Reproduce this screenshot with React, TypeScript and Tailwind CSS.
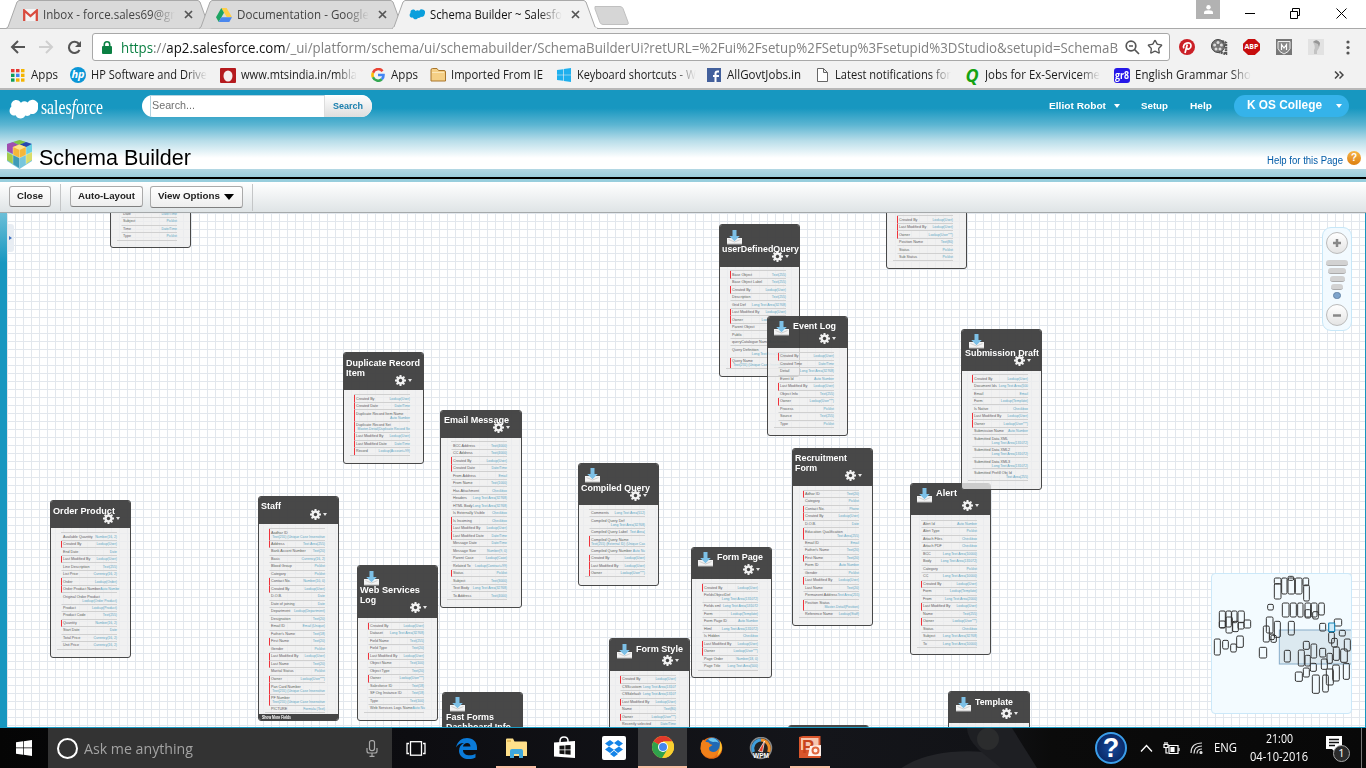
import { useLayoutEffect, useRef, type ReactNode } from "react";
import { Star } from "lucide-react";

/** Single line of text squeezed or stretched to a given width. */
function Fit({ w, className = "", children }: { w: number; className?: string; children: ReactNode }) {
  const ref = useRef<HTMLSpanElement>(null);
  useLayoutEffect(() => {
    const el = ref.current;
    if (el && el.offsetWidth) {
      el.style.transform = "none";
      el.style.transform = `scaleX(${w / el.getBoundingClientRect().width})`;
    }
  }, [w]);
  return (
    <span className={`block shrink-0 whitespace-nowrap ${className}`} style={{ width: w }}>
      <span ref={ref} className="inline-block origin-left">{children}</span>
    </span>
  );
}

/* ---------------------------------------------------------------- browser */

const fade = "[mask-image:linear-gradient(to_right,black_82%,transparent)]";

function Tab({ title, icon, active, className }: { title: string; icon: ReactNode; active?: boolean; className: string }) {
  return (
    <div className={`relative h-[29px] w-[206px] shrink-0 ${className}`}>
      <svg className="absolute inset-0" width="206" height="29" viewBox="0 0 206 29">
        <path d="M0 28.5 L2 27 L11 2 L13 .5 H192 L194 2 L203 27 L206 28.5" fill={active ? "#f2f2f2" : "#dadada"} stroke="#a9a9a9" />
        {active && <path d="M1 28.5H205" stroke="#f2f2f2" strokeWidth="2" />}
      </svg>
      <div className="relative flex h-[29px] items-center pl-[17px]">
        {icon}
        <Fit w={132} className={`ml-[5px] text-[12px] ${fade} ${active ? "text-[#111]" : "text-[#444]"}`}>{title}</Fit>
        <svg className="ml-[9px]" width="9" height="9" viewBox="0 0 9 9"><path d="M1 1l7 7M8 1l-7 7" stroke="#555" strokeWidth="1.7" /></svg>
      </div>
    </div>
  );
}

const Gmail = () => (
  <svg width="15" height="12" viewBox="0 0 15 12"><rect width="15" height="12" rx="1" fill="#f3f3f3" /><path d="M1.2 12V1.5L7.5 7l6.300-5.500V12" fill="none" stroke="#d94b3e" strokeWidth="2.300" /></svg>
);
const Drive = () => (
  <svg width="16" height="14" viewBox="0 0 16 14"><path d="M5.300 0h5.300L16 9h-5.300z" fill="#ffcf48" /><path d="M5.300 0L0 9.200 2.700 14 8 4.700z" fill="#1da462" /><path d="M5.300 9.300H16L13.300 14H2.700z" fill="#4a87ee" /></svg>
);
const Cloud = ({ w, h, fill }: { w: number; h: number; fill: string }) => (
  <svg width={w} height={h} viewBox="0 0 28 20" className="shrink-0"><path d="M11.500 3.500A5.500 5.500 0 0 1 18 3.200a5.800 5.800 0 0 1 10 5.800c-.3 4-4 6-7 5.200-1 2-3.500 2.600-5.300 1.700-1.500 3.800-7.700 4-9.200-.3C3 16.500.2 13.800.6 10.800c.1-2 .9-2.900 1.700-3.700C.9 2 7.500-1.800 11.500 3.500z" fill={fill} /></svg>
);

function WindowsLogo({ s, fill }: { s: number; fill: string }) {
  return <svg width={s} height={s} viewBox="0 0 16 16"><path d="M0 2.300L7 1.300V7.600H0zM7.700 1.200L16 0V7.600H7.700zM0 8.300H7V14.700L0 13.700zM7.700 8.300H16V16L7.700 14.800z" fill={fill} /></svg>;
}

function Bookmark({ icon, text, w, faded, className }: { icon: ReactNode; text: string; w: number; faded?: boolean; className: string }) {
  return (
    <div className={`flex shrink-0 items-center gap-[5px] ${className}`}>
      <span className="flex w-[16px] shrink-0 justify-center">{icon}</span>
      <Fit w={w} className={faded ? fade : ""}>{text}</Fit>
    </div>
  );
}

const appColors = ["#e53935", "#e53935", "#f4b400", "#0f9d58", "#4285f4", "#f4b400", "#0f9d58", "#f4b400", "#f4b400"];

function Browser() {
  return (
    <div className="shrink-0 font-['Open_Sans','Noto_Sans',sans-serif]">
      <div className="flex h-[29px] border-b border-[#a9a9a9] bg-white">
        <Tab className="ml-[6px]" title="Inbox - force.sales69@gr" icon={<Gmail />} />
        <Tab className="-ml-[13px]" title="Documentation - Google" icon={<Drive />} />
        <Tab className="-ml-[13px] z-10" active title="Schema Builder ~ Salesfo" icon={<Cloud w={16} h={11} fill="#0a9fdc" />} />
        <svg className="-ml-[4px] mt-[6px]" width="36" height="19" viewBox="0 0 36 19"><path d="M1 .5H26q2 0 3 2L34 16q1 2.500-1 2.500H9q-2 0-3-2L1 3z" fill="#d6d6d6" stroke="#c0c0c0" /></svg>
        <div className="ml-auto mr-[19px] flex">
          <div className="flex h-[19px] w-[24px] items-center justify-center bg-[#b2b2b2]">
            <svg width="9" height="9" viewBox="0 0 9 9" fill="#fff"><circle cx="4.500" cy="2.200" r="2.200" /><path d="M0 9V7.500Q0 5.200 4.500 5.200T9 7.500V9z" /></svg>
          </div>
          <svg className="ml-[25px] mt-[8px]" width="10" height="10"><path d="M0 5.500H10" stroke="#000" /></svg>
          <svg className="ml-[35px] mt-[8px]" width="11" height="11" fill="none" stroke="#000"><path d="M.5 3.500h7v7h-7zM2.500 3.500v-3h7v7h-2" /></svg>
          <svg className="ml-[35px] mt-[8px]" width="11" height="11" stroke="#000"><path d="M.5.500l10 10M10.500.500l-10 10" /></svg>
        </div>
      </div>
      <div className="flex h-[33px] items-center bg-[#f2f2f2] pt-[3px]">
        <svg className="ml-[10px]" width="15" height="14" viewBox="0 0 15 14" fill="none" stroke="#555" strokeWidth="2"><path d="M8 1L2 7l6 6M2 7h13" /></svg>
        <svg className="ml-[14px]" width="15" height="14" viewBox="0 0 15 14" fill="none" stroke="#cfcfcf" strokeWidth="2"><path d="M7 1l6 6-6 6M13 7H0" /></svg>
        <svg className="ml-[13px]" width="15" height="15" viewBox="0 0 15 15" fill="none" stroke="#555" strokeWidth="2.100"><path d="M12.500 10A5.600 5.600 0 1 1 12 4" /><path d="M14 1v6H8z" fill="#555" stroke="none" /></svg>
        <div className="ml-[10px] flex h-[28px] w-[1078px] shrink-0 items-center rounded-[3px] border border-[#a8a8a8] bg-white text-[14px] text-[#808080]">
          <svg className="ml-[9px] mr-[9px] shrink-0" width="10" height="13" viewBox="0 0 10 13"><rect y="5" width="10" height="8" rx="1" fill="#0b8043" /><path d="M2.300 6V3.500a2.700 2.700 0 0 1 5.400 0V6" fill="none" stroke="#0b8043" strokeWidth="1.600" /></svg>
          <Fit w={997}>
            <span className="text-[#0b8043]">https</span>://<span className="text-[#111]">ap2.salesforce.com</span>/_ui/platform/schema/ui/schemabuilder/SchemaBuilderUi?retURL=%2Fui%2Fsetup%2FSetup%3Fsetupid%3DStudio&amp;setupid=SchemaB
          </Fit>
          <svg className="ml-[7px] shrink-0" width="15" height="15" viewBox="0 0 15 15" fill="none" stroke="#555" strokeWidth="1.700"><circle cx="6" cy="6" r="4.800" /><path d="M9.500 9.500L14 14M4 6h4" /></svg>
          <Star className="ml-[7px] shrink-0" size={16} color="#555" />
        </div>
        <svg className="ml-[9px]" width="16" height="16" viewBox="0 0 16 16"><circle cx="8" cy="8" r="8" fill="#cb2027" /><path d="M4.800 9.300C2.500 4 12.500 1.500 12 7c-.3 3.500-3.800 4-4.300 2M8.300 5.500L6 14" fill="none" stroke="#fff" strokeWidth="1.700" /></svg>
        <svg className="ml-[16px]" width="17" height="16" viewBox="0 0 17 16"><circle cx="7" cy="7" r="6.500" fill="#777" stroke="#444" /><g fill="#ddd"><circle cx="7" cy="3.500" r="1.500" /><circle cx="3.600" cy="6" r="1.500" /><circle cx="10.400" cy="6" r="1.500" /><circle cx="5" cy="10" r="1.500" /><circle cx="9" cy="10" r="1.500" /></g><path d="M11 2l4 2v11l-7-2" fill="none" stroke="#555" strokeWidth="2.500" strokeDasharray="2 .7" /></svg>
        <div className="ml-[15px] flex h-[16px] w-[17px] items-center justify-center bg-[#c70d0d] text-[7px] font-bold text-white [clip-path:polygon(30%_0,70%_0,100%_30%,100%_70%,70%_100%,30%_100%,0_70%,0_30%)]">ABP</div>
        <svg className="ml-[16px]" width="16" height="16" viewBox="0 0 16 16"><rect width="16" height="16" fill="#777" /><path d="M2 2.500h12v7Q13 13 8 15 3 13 2 9.500z" fill="#8a8a8a" stroke="#eee" /><path d="M5.500 11V5.500L8 9l2.500-3.500V11" fill="none" stroke="#fff" strokeWidth="1.200" /></svg>
        <svg className="ml-[16px]" width="16" height="16" viewBox="0 0 16 16"><rect width="16" height="16" fill="#e2e2e2" /><path d="M5 3q4-4 7 1l-1 5-2 3v3H6v-4q2-3-1-8z" fill="#c3c3c3" /><path d="M5 3q4-4 7 1l-1 4-1-3z" fill="#969696" /></svg>
        <svg className="ml-[22px]" width="4" height="15" viewBox="0 0 4 15" fill="#555"><circle cx="2" cy="2" r="1.600" /><circle cx="2" cy="7.500" r="1.600" /><circle cx="2" cy="13" r="1.600" /></svg>
      </div>
      <div className="flex h-[28px] items-center border-b-2 border-[#b8b8b8] bg-[#f2f2f2] text-[12px] text-[#1b1b1b]">
        <Bookmark className="ml-[10px]" text="Apps" w={27} icon={<svg width="14" height="13" viewBox="0 0 14 13">{appColors.map((c, i) => <rect key={i} x={(i % 3) * 5} y={Math.floor(i / 3) * 4.700} width="3.500" height="3.300" fill={c} />)}</svg>} />
        <Bookmark className="ml-[12px]" text="HP Software and Drive" w={116} faded icon={<span className="flex size-[16px] items-center justify-center rounded-full bg-[#0b96d6] pb-[2px] text-[11px] font-bold italic text-white">hp</span>} />
        <Bookmark className="ml-[13px]" text="www.mtsindia.in/mbla" w={116} faded icon={<svg width="16" height="15"><rect width="16" height="15" rx="1" fill="#b51a1e" /><ellipse cx="8" cy="8" rx="4.500" ry="5.500" fill="#f6eeee" /></svg>} />
        <Bookmark className="ml-[13px]" text="Apps" w={27} icon={<svg width="14" height="14" viewBox="0 0 14 14" fill="none" strokeWidth="2.600"><path d="M11.500 3.200A5.500 5.500 0 0 0 2 4.700" stroke="#ea4335" /><path d="M2 4.700a5.500 5.500 0 0 0 0 4.600" stroke="#fbbc05" /><path d="M2 9.300a5.500 5.500 0 0 0 8.800 2" stroke="#34a853" /><path d="M10.800 11.300Q12.600 9.600 12.500 7H7" stroke="#4285f4" /></svg>} />
        <Bookmark className="ml-[12px]" text="Imported From IE" w={92} icon={<svg width="16" height="14" viewBox="0 0 16 14"><path d="M1 13V2q0-1.500 1.500-1.500H7L8.500 2.500H14q1.500 0 1.500 1.500v9z" fill="#f5cf85" stroke="#a9762c" /><path d="M2 4.500h12" stroke="#fbe6b8" /></svg>} />
        <Bookmark className="ml-[13px]" text="Keyboard shortcuts - W" w={119} faded icon={<WindowsLogo s={14} fill="#1fb0ee" />} />
        <Bookmark className="ml-[10px]" text="AllGovtJobs.in" w={74} icon={<svg width="14" height="14"><rect width="14" height="14" fill="#43609c" /><path d="M8.500 14V5.500q0-2 2-2H12M6 8h6" fill="none" stroke="#fff" strokeWidth="2" /></svg>} />
        <Bookmark className="ml-[13px]" text="Latest notifications for" w={116} faded icon={<svg width="11" height="14" fill="none" stroke="#666"><path d="M.5.500h6l4 4v9H.5zM6.500.500v4h4" fill="#fff" /></svg>} />
        <Bookmark className="ml-[13px]" text="Jobs for Ex-Serviceme" w={115} faded icon={<span className="text-[18px] font-bold italic leading-none text-[#14a214]">Q</span>} />
        <Bookmark className="ml-[14px]" text="English Grammar Sho" w={116} faded icon={<span className="flex h-[15px] w-[16px] items-center justify-center rounded-[3px] bg-[#2618e8] text-[10px] font-bold leading-none text-white"><Fit w={14}>gr8</Fit></span>} />
        <svg className="ml-auto mr-[22px]" width="10" height="8" fill="none" stroke="#444" strokeWidth="1.500"><path d="M1 0.500l3.500 3.500L1 7.500M5.500 .5L9 4 5.500 7.500" /></svg>
      </div>
    </div>
  );
}

/* ------------------------------------------------------------ page header */

function PageHeader() {
  return (
    <div className="shrink-0 font-['Liberation_Sans',Arial,sans-serif]">
      <div className="h-[79px] bg-[linear-gradient(to_bottom,#1797c0_0%,#1797c0_23%,#5cb5d2_44%,#b7dde9_64%,#fff_86%)]">
        <div className="flex h-[48px] items-start pt-[5px]">
          <div className="ml-[9px] mt-[4px]"><Cloud w={29} h={21} fill="#fff" /></div>
          <Fit w={62} className="ml-[3px] font-['Liberation_Serif',serif] text-[21px] leading-[24px] text-white"><span>sales</span><span className="italic">f</span>orce</Fit>
          <div className="ml-[39px] flex h-[22px] w-[230px] overflow-hidden rounded-full bg-white">
            <div className="ml-[8px] flex w-[175px] items-start border-x border-t border-[#b5d3df] border-r-[#ddd]"><Fit w={43} className="pl-px text-[11px] leading-[18px] text-[#707070]">Search...</Fit></div>
            <div className="flex flex-1 items-center bg-linear-to-b from-white to-[#dedede] pl-[8px] text-[9.500px] font-bold text-[#1a7fae]"><Fit w={30}>Search</Fit></div>
          </div>
          <div className="ml-auto mr-[17px] flex h-[22px] items-center text-[9.500px] font-bold text-white">
            <Fit w={57}>Elliot Robot</Fit>
            <span className="ml-[8px] border-x-[3.500px] border-t-4 border-x-transparent border-t-white" />
            <Fit w={27} className="ml-[21px]">Setup</Fit>
            <Fit w={22} className="ml-[22px]">Help</Fit>
            <div className="ml-[22px] flex h-[22px] w-[115px] items-center rounded-full bg-[#35b3ea] pl-[13px] text-[12px]">
              <Fit w={75} className="pb-[2px]">K OS College</Fit>
              <span className="ml-[14px] border-x-[3.500px] border-t-4 border-x-transparent border-t-white" />
            </div>
          </div>
        </div>
        <div className="flex h-[31px] items-center pt-[7px]">
          <svg className="ml-[7px] -mt-[6px]" width="25" height="29" viewBox="0 0 25 29">
            <path d="M12.500 0L25 4v17l-12.500 8L0 21V4z" fill="#78c6dc" />
            <path d="M0 4l6-2 6 3v9l-6 0-6-3z" fill="#a04fb0" /><path d="M6 2l6.500-2L19 2l-6.500 3z" fill="#82c341" /><path d="M19 2l6 2-5 4-8-3z" fill="#2747ae" />
            <path d="M6 7l6.500-2.500L19 7v8l-6.500 3L6 15z" fill="#f5b73a" /><path d="M6 7l6.500-2.500L19 7l-6.500 3z" fill="#ffe28a" />
            <path d="M0 12l6 3v9l-6-4z" fill="#a4cc4c" /><path d="M6 15l6.500 3v10L6 24z" fill="#3e9bb6" /><path d="M19 7l6-3v8l-6 3z" fill="#6bd0e2" /><path d="M19 15l6-3v8l-6 4z" fill="#d9dd6a" />
            <path d="M12.500 10v18M6 7v17M19 7v17M0 12l12.500 6L25 12" fill="none" stroke="#fff" strokeOpacity=".4" strokeWidth=".8" />
          </svg>
          <Fit w={152} className="ml-[7px] pt-[2px] text-[22px] leading-[26px] text-black">Schema Builder</Fit>
          <Fit w={76} className="ml-auto pt-[7px] text-[10px] text-[#015ba7]">Help for this Page</Fit>
          <span className="ml-[4px] mr-[5px] mt-[1px] flex size-[14px] items-center justify-center rounded-full bg-linear-to-b from-[#f6b545] to-[#dd7f0a] text-[10px] font-bold text-white">?</span>
        </div>
      </div>
      <div className="h-[8px] bg-linear-to-b from-[#b4d8e4] to-[#9bcddc]" />
      <div className="h-[2px] bg-black" />
      <div className="h-[3px] bg-[#98cedd]" />
      <div className="flex h-[31px] items-center border-b border-[#a5a9aa] bg-linear-to-b from-white to-[#dfe4e6] text-[9.500px] font-bold text-[#222]">
        <div className="-mt-px ml-[9px] flex h-[21px] w-[42px] items-center justify-center rounded-[3px] border border-[#aaa] border-b-[#7f7f7f] bg-linear-to-b from-white to-[#eee]"><Fit w={26}>Close</Fit></div>
        <div className="ml-[9px] h-[27px] w-px bg-[#c4c6c7]" />
        <div className="-mt-px ml-[9px] flex h-[21px] w-[73px] items-center justify-center rounded-[3px] border border-[#aaa] border-b-[#7f7f7f] bg-linear-to-b from-white to-[#eee]"><Fit w={57}>Auto-Layout</Fit></div>
        <div className="ml-[7px] flex h-[22px] w-[93px] items-center justify-center gap-[4px] rounded-[3px] border border-[#aaa] border-b-[#7f7f7f] bg-linear-to-b from-white to-[#eee] pb-px pr-[2px]">
          <Fit w={62}>View Options</Fit>
          <span className="border-x-[5px] border-t-[6px] border-x-transparent border-t-black" />
        </div>
        <div className="ml-[9px] h-[27px] w-px bg-[#c4c6c7]" />
      </div>
    </div>
  );
}

/* ----------------------------------------------------------------- canvas */

const L = "Lookup(User)", O = "Lookup(User***)", T = "Text(255)", P = "Picklist", C = "Checkbox", A = "Auto Number", D = "Date/Time", LT = "Long Text Area(32768)", U = "Text(255) (Unique Case Insensitive";

/** Field rows: "!" marks a required field, "/" puts the type on its own line. */
type Card = { x: number; y: number; h: number; w?: number; hdr: number; list: number; title: string[]; tx?: number; ty: number; icon?: [number, number]; gear?: [number, number]; more?: boolean; f: [string, string, string?][] };

const cards: Card[] = [
  { x: 110, y: 180, h: 68, hdr: 10, list: 29.700, title: [], ty: 0, f: [["Date", D], ["Subject", P], ["Time", D], ["Type", P]] },
  { x: 886, y: 170, h: 99, hdr: 10, list: 45.300, title: [], ty: 0, f: [["Created By", L, "!"], ["Last Modified By", L, "!"], ["Owner", O, "!"], ["Position Name", "Text(80)"], ["Status", P], ["Sub Status", P]] },
  { x: 719, y: 224, h: 153, hdr: 43, list: 46.300, title: ["userDefinedQuery"], ty: 25, icon: [8, 6], gear: [57.500, 32], f: [["Base Object", T, "!"], ["Base Object Label", T], ["Created By", L, "!"], ["Description", T], ["Grid Def", LT], ["Last Modified By", L, "!"], ["Owner", O, "!"], ["Parent Object", T], ["Public", C], ["queryCatalogue Name", "Auto Numbe"], ["Query Definition", LT, "/"], ["Query Name", U, "!/"]] },
  { x: 767, y: 316, h: 120, hdr: 32, list: 36, title: ["Event Log"], tx: 26, ty: 10, icon: [7, 5], gear: [56.500, 22], f: [["Created By", L, "!"], ["Created Time", D], ["Detail", LT], ["Event Id", A], ["Last Modified By", L, "!"], ["Object Info", T], ["Owner", O, "!"], ["Process", P], ["Source", T], ["Type", P]] },
  { x: 343, y: 352, h: 112, hdr: 38, list: 42.300, title: ["Duplicate Record", "Item"], ty: 11, gear: [56.500, 28], f: [["Created By", L, "!"], ["Created Date", D, "!"], ["Duplicate Record Item Name", A, "!/"], ["Duplicate Record Set", "Master-Detail(Duplicate Record Se", "!/"], ["Last Modified By", L, "!"], ["Last Modified Date", D, "!"], ["Record", "Lookup(Account+99)", "!"]] },
  { x: 50, y: 500, h: 158, hdr: 28, list: 32.300, title: ["Order Product"], ty: 11, gear: [57.500, 18], f: [["Available Quantity", "Number(16, 2)"], ["Created By", L, "!"], ["End Date", "Date"], ["Last Modified By", L, "!"], ["Line Description", T], ["List Price", "Currency(16, 2)"], ["Order", "Lookup(Order)", "!"], ["Order Product Number", "Auto Numbe", "!"], ["Original Order Product", "Lookup(Order Product)", "/"], ["Product", "Lookup(Product)"], ["Product Code", T], ["Quantity", "Number(16, 2)", "!"], ["Start Date", "Date"], ["Total Price", "Currency(16, 2)"], ["Unit Price", "Currency(16, 2)"]] },
  { x: 258, y: 496, h: 225, hdr: 28, list: 32.300, title: ["Staff"], ty: 10, gear: [56.500, 18], more: true, f: [["Aadhar ID", U, "!/"], ["Address", "Text Area(255)", "!"], ["Bank Accont Number", "Text(20)"], ["Basic", "Currency(16, 2)"], ["Blood Group", P], ["Category", P], ["Contact No.", "Number(10, 0)", "!"], ["Created By", L, "!"], ["D.O.B.", "Date"], ["Date of joining", "Date"], ["Department", "Lookup(Department)"], ["Designation", "Text(20)"], ["Email ID", "Email (Unique)"], ["Father's Name", "Text(18)"], ["First Name", "Text(20)", "!"], ["Gender", P], ["Last Modified By", L, "!"], ["Last Name", "Text(20)", "!"], ["Marital Status", P], ["Owner", O, "!"], ["Pan Card Number", U, "!/"], ["PF Number", U, "!/"], ["PICTURE", "Formula (Text)"]] },
  { x: 357, y: 565, h: 156, hdr: 53, list: 56.500, title: ["Web Services", "Log"], ty: 25, icon: [7, 6], gear: [57.500, 42.500], f: [["Created By", L, "!"], ["Dataset", LT], ["Field Name", T], ["Field Type", "Text(20)"], ["Last Modified By", L, "!"], ["Object Name", "Text(100)"], ["Object Type", "Text(20)"], ["Owner", O, "!"], ["Salesforce ID", "Text(18)"], ["SF Org Instance ID", "Text(18)"], ["Type", "Text(100)"], ["Web Services Logs Name", "Auto Nu"]] },
  { x: 440, y: 410, w: 82, h: 198, hdr: 28, list: 31.300, title: ["Email Message"], tx: 4, ty: 10, gear: [57.500, 17.500], f: [["BCC Address", "Text(4000)"], ["CC Address", "Text(4000)"], ["Created By", L, "!"], ["Created Date", D, "!"], ["From Address", "Email"], ["From Name", "Text(1000)"], ["Has Attachment", C], ["Headers", LT], ["HTML Body", LT], ["Is Externally Visible", C], ["Is Incoming", C, "!"], ["Last Modified By", L, "!"], ["Last Modified Date", D, "!"], ["Message Date", D], ["Message Size", "Number(9, 0)"], ["Parent Case", "Lookup(Case)"], ["Related To", "Lookup(Contract+99)"], ["Status", P, "!"], ["Subject", "Text(3000)"], ["Text Body", LT], ["To Address", "Text(4000)"]] },
  { x: 442, y: 692, h: 120, hdr: 60, list: 70, title: ["Fast Forms", "Dashboard Info"], tx: 4, ty: 25, icon: [8, 5], f: [] },
  { x: 578, y: 463, h: 123, hdr: 42, list: 45.700, title: ["Compiled Query"], ty: 25, icon: [7, 5], gear: [56.500, 32], f: [["Comments", "Long Text Area(512)"], ["Compiled Query Def", LT, "/"], ["Compiled Query Label", "Text Area("], ["Compiled Query Name", "Text(255) (External ID) (Unique Cas", "!/"], ["Compiled Query Number", "Auto Nu"], ["Created By", L, "!"], ["Last Modified By", L, "!"], ["Owner", O, "!"]] },
  { x: 609, y: 638, h: 130, hdr: 33, list: 37, title: ["Form Style"], tx: 27, ty: 11, icon: [8, 6], gear: [57.500, 22], f: [["Created By", L, "!"], ["CSScustom", "Long Text Area(13107"], ["CSSdefault", "Long Text Area(13107"], ["Last Modified By", L, "!"], ["Name", "Text(80)"], ["Owner", O, "!"], ["Recently selected", D]] },
  { x: 691, y: 547, h: 131, hdr: 32, list: 36.300, title: ["Form Page"], tx: 26, ty: 10, icon: [7, 5], gear: [57, 22], f: [["Created By", L, "!"], ["FieldsObjectDef", "Long Text Area(131072)", "/"], ["Fields xml", "Long Text Area(131072"], ["Form", "Lookup(Template)"], ["Form Page ID", A], ["Html", "Long Text Area(131072)"], ["Is Hidden", C], ["Last Modified By", L, "!"], ["Owner", O, "!"], ["Page Order", "Number(18, 0)"], ["Page Title", "Long Text Area(500)"]] },
  { x: 792, y: 448, h: 178, hdr: 38, list: 41.700, title: ["Recruitment", "Form"], ty: 10, gear: [57.500, 27.500], f: [["Adhar ID", "Text(20)", "!"], ["Category", P], ["Contact No.", "Phone", "!"], ["Created By", L, "!"], ["D.O.B.", "Date"], ["Education Qualification", "Text Area(255)", "!/"], ["Email ID", "Email"], ["Father's Name", "Text(20)"], ["First Name", "Text(20)", "!"], ["Form ID", A], ["Gender", P], ["Last Modified By", L, "!"], ["Last Name", "Text(20)"], ["Permanent Address", "Text Area(255)"], ["Position Status", "Master-Detail(Position)", "!/"], ["Reference Name", "Lookup(Staff)"]] },
  { x: 910, y: 483, h: 172, hdr: 32, list: 36.500, title: ["Alert"], tx: 26, ty: 10, icon: [7, 5], gear: [56.500, 22], f: [["Alert Id", A], ["Alert Type", P], ["Attach Files", C], ["Attach PDF", C], ["BCC", "Long Text Area(10000)"], ["Body", "Long Text Area(131072)"], ["Category", P], ["CC", "Long Text Area(10000)"], ["Created By", L, "!"], ["Form", "Lookup(Template)"], ["From", "Long Text Area(2000)"], ["Last Modified By", L, "!"], ["Name", T], ["Owner", O, "!"], ["Status", C], ["Subject", LT], ["To", "Long Text Area(10000)"]] },
  { x: 961, y: 329, h: 161, hdr: 42, list: 45.300, title: ["Submission Draft"], tx: 4, ty: 23.500, icon: [8, 5], gear: [57.500, 31.500], f: [["Created By", L, "!"], ["Document Ids", "Long Text Area(500"], ["Email", "Email"], ["Form", "Lookup(Template)"], ["Is Native", C], ["Last Modified By", L, "!"], ["Owner", O, "!"], ["Submission Name", A], ["Submitted Data XML", "Long Text Area(131072)", "/"], ["Submitted Data XML2", "Long Text Area(131072)", "/"], ["Submitted Data XML3", "Long Text Area(131072)", "/"], ["Submitted Prefill Obj Id", "Text Area(255)", "/"]] },
  { x: 948, y: 691, w: 82, h: 90, hdr: 32, list: 36, title: ["Template"], tx: 27, ty: 11, icon: [8, 6], gear: [58, 22], f: [] },
  { x: 788, y: 725, h: 60, hdr: 30, list: 36, title: [], ty: 0, f: [] },
];

const titleWidths: Record<string, number> = { userDefinedQuery: 77, "Event Log": 43, "Duplicate Record": 74, Item: 19, "Order Product": 62, Staff: 20, "Web Services": 60, Log: 16, "Email Message": 65, "Fast Forms": 48, "Dashboard Info": 65, "Compiled Query": 69, "Form Style": 47, "Form Page": 46, Recruitment: 52, Form: 22, Alert: 21, "Submission Draft": 74, Template: 38 };

function Tray() {
  return (
    <svg width="15" height="15" viewBox="0 0 15 15">
      <path d="M0 8h15v6H0z" fill="#f3f3f3" /><path d="M0 14h15" stroke="#bbb" /><path d="M1.500 9.500L7.500 12l6-2.500" fill="none" stroke="#d0d0d0" />
      <path d="M5.500 0h4v6h3.300L7.500 11.300 2.200 6h3.300z" fill="#7dc0e6" />
    </svg>
  );
}

function Gear() {
  return (
    <svg width="17" height="11" viewBox="0 0 17 11">
      <g stroke="#f1f1f1" strokeWidth="2"><path d="M5.500 0v11M0 5.500h11M1.600 1.600l7.800 7.800M9.400 1.600L1.600 9.400" /></g>
      <circle cx="5.500" cy="5.500" r="3" fill="none" stroke="#f1f1f1" strokeWidth="2.200" /><circle cx="5.500" cy="5.500" r="1.700" fill="#444" />
      <path d="M13 4h4l-2 3z" fill="#e6e6e6" />
    </svg>
  );
}

function EntityCard({ c }: { c: Card }) {
  return (
    <div className="absolute overflow-hidden rounded-[3px] border border-[#484848] bg-[#eeeeee]/80" style={{ left: c.x - 7, top: c.y - 213, width: c.w ?? 81, height: c.h }}>
      <div className="bg-[#1e1e1e]/80" style={{ height: c.hdr - 1 }} />
      <div className="pl-[10px]" style={{ paddingTop: c.list - c.hdr }}>
        <div className="w-[56px] border-t border-[#d0d0d0]">
          {c.f.map(([name, type, flag = ""], i) => {
            const two = flag.includes("/");
            return (
              <div key={i} className={`flex border-b border-[#d0d0d0] border-l pl-[1px] text-[3.700px] leading-[4px] ${two ? "h-[11.400px] flex-col pt-[1.500px]" : "h-[7.500px] items-center justify-between"} ${flag.includes("!") ? "border-l-[#f0323c]" : "border-l-transparent"}`}>
                <span className="whitespace-nowrap text-[#5c5c5c]">{name}</span>
                <span className={`whitespace-nowrap text-[3.400px] text-[#5ba6c4] ${two ? "self-end" : ""}`}>{type}</span>
              </div>
            );
          })}
        </div>
        {c.f.length > 0 && <div className="-mt-px ml-[-4px] h-px w-[60px] bg-[#d0d0d0]" />}
      </div>
      {c.more && <div className="absolute inset-x-0 bottom-0 flex h-[6px] items-center bg-[#444] pl-[3px] text-[4.500px] font-bold leading-[5px] text-white"><Fit w={29}>Show More Fields</Fit></div>}
      {c.icon && <div className="absolute" style={{ left: c.icon[0] - 1, top: c.icon[1] - 1 }}><Tray /></div>}
      {c.gear && <div className="absolute" style={{ left: c.gear[0] - 6, top: c.gear[1] - 6.500 }}><Gear /></div>}
      <div className="absolute text-[9.500px] font-bold leading-[10px] text-white" style={{ left: (c.tx ?? 3) - 1, top: c.ty - 6 }}>
        {c.title.map((t) => <Fit key={t} w={titleWidths[t]}>{t}</Fit>)}
      </div>
    </div>
  );
}

/** Overview boxes as x, y, width, height in thirds of a pixel. */
const mini: number[][] = [[223,40,20,18],[223,57,20,46],[245,40,16,48],[264,35,17,12],[264,40,20,48],[286,40,20,48],[309,40,17,23],[311,61,17,48],[203,119,17,17],[247,115,20,42],[271,115,18,42],[293,115,16,42],[315,115,17,42],[315,135,17,25],[334,115,17,42],[338,141,17,22],[356,115,17,36],[58,139,18,50],[58,169,18,21],[78,139,16,48],[78,157,19,48],[95,139,16,35],[98,170,17,31],[114,139,19,35],[114,173,18,20],[132,166,20,24],[190,184,18,48],[199,157,20,48],[223,170,18,48],[209,208,14,17],[213,212,16,21],[265,170,18,41],[359,176,18,23],[403,163,22,21],[418,197,18,17],[43,223,18,48],[68,227,17,26],[92,238,17,24],[110,214,20,34],[178,248,22,32],[253,257,18,35],[310,230,18,24],[333,238,17,42],[295,256,18,48],[315,272,16,32],[359,251,18,26],[386,203,17,32],[395,221,17,26],[400,247,18,40],[381,266,16,30],[433,223,18,36],[422,253,20,40],[331,296,18,24],[364,283,18,31],[310,310,18,27],[286,322,21,28],[337,331,21,55],[368,331,17,51],[379,313,21,48],[398,301,20,48],[430,296,18,48]];

function Minimap() {
  return (
    <div className="absolute left-[1204px] top-[360px] h-[141px] w-[141px] rounded-[4px] border border-[#cbe8f9] bg-[#f3fbff]">
      <svg width="139" height="139" viewBox="36 28 417 417">
        <rect x="238" y="196" width="220" height="102" fill="#dce9f0" stroke="#86acc8" strokeWidth="3" />
        {mini.map(([x, y, w, h], i) => <rect key={i} x={x} y={y} width={w} height={h} rx="4" fill="none" stroke="#333" strokeWidth="3" />)}
        <rect x="386" y="175" width="18" height="26" rx="2" fill="#cdeaf8" stroke="#1482b4" strokeWidth="3.500" />
      </svg>
    </div>
  );
}

function ZoomControl() {
  return (
    <div className="absolute left-[1315px] top-[14px] flex h-[104px] w-[30px] flex-col items-center rounded-[9px] border border-[#c7e7f8] bg-[#f2faff] pt-[4px]">
      <div className="flex size-[22px] shrink-0 items-center justify-center rounded-full border border-[#bbb] bg-linear-to-b from-white to-[#e4e4e4]"><svg width="8" height="8"><path d="M0 4h8M4 0v8" stroke="#888" strokeWidth="2.500" /></svg></div>
      <div className="mt-[6px] flex flex-col items-center gap-[2px]">
        <div className="h-[6px] w-[22px] rounded-full border-b border-[#aaa] bg-[#d2d2d2]" />
        <div className="h-[6px] w-[18px] rounded-full border-b border-[#aaa] bg-[#d2d2d2]" />
        <div className="h-[6px] w-[15px] rounded-full border-b border-[#aaa] bg-[#d2d2d2]" />
        <div className="h-[6px] w-[12px] rounded-full border-b border-[#aaa] bg-[#d2d2d2]" />
        <div className="h-[7px] w-[8px] rounded-full border border-[#6585a6] bg-[#7ea4cc]" />
      </div>
      <div className="mt-[5px] flex size-[22px] shrink-0 items-center justify-center rounded-full border border-[#bbb] bg-linear-to-b from-white to-[#e4e4e4]"><svg width="8" height="3"><path d="M0 1.500h8" stroke="#888" strokeWidth="2.500" /></svg></div>
    </div>
  );
}

function Canvas() {
  return (
    <div className="flex h-[515px] shrink-0 border-b border-[#1797c0] font-['Liberation_Sans',Arial,sans-serif]">
      <div className="w-[7px] bg-[linear-gradient(to_bottom,#6cbfd8,#1797c0_50px)]" />
      <div className="relative w-[1358px] overflow-hidden bg-white bg-[linear-gradient(to_right,#e2e7ed_1px,transparent_1px),linear-gradient(to_bottom,#e2e7ed_1px,transparent_1px)] bg-[size:8px_8px]">
        <div className="absolute left-px top-[11px] flex h-[28px] w-[6px] items-center rounded-r-[3px] bg-[#e8edf3] pl-px"><span className="border-y-2 border-l-[3px] border-y-transparent border-l-[#3b6fc0]" /></div>
        {cards.map((c, i) => <EntityCard key={i} c={c} />)}
        <ZoomControl />
        <Minimap />
      </div>
      <div className="w-px bg-[#1797c0]" />
    </div>
  );
}

/* ---------------------------------------------------------------- taskbar */

function Taskbar() {
  return (
    <div className="relative flex h-[40px] shrink-0 items-center overflow-hidden bg-[linear-gradient(to_right,#050505,#0d0d11_30%,#14151a_60%,#121317_72%,#0b0b0b_77%,#080808)] font-['Open_Sans','Noto_Sans',sans-serif] text-white">
      <svg className="absolute left-[820px] top-0" width="230" height="40"><path d="M80 41Q110 20 165 24L190 41z" fill="#242529" /><path d="M147 0q0 10 12 22l22 18h36L192 0z" fill="#1e1f23" /><circle cx="168" cy="11" r="11" fill="#2b2c2d" /></svg>
      <div className="relative flex h-full w-full items-center">
        <div className="flex w-[48px] justify-center"><WindowsLogo s={16} fill="#fff" /></div>
        <div className="flex h-full w-[344px] items-center bg-[#333]">
          <span className="ml-[9px] size-[21px] rounded-full border-[2.500px] border-white" />
          <Fit w={109} className="ml-[6px] text-[14px] text-[#a3a3a3]">Ask me anything</Fit>
          <svg className="ml-[173px]" width="12" height="17" viewBox="0 0 12 17" fill="none" stroke="#aaa" strokeWidth="1.200"><rect x="3.500" y=".6" width="5" height="10" rx="2" /><path d="M1 8v3q0 2 2 2h6q2 0 2-2V8M6 13v3.500M3.500 16.400h5" /></svg>
        </div>
        <svg className="ml-[14px]" width="20" height="15" viewBox="0 0 20 15" fill="none" stroke="#fff" strokeWidth="1.300"><rect x="4.500" y=".7" width="11" height="13.500" /><path d="M3 2.500H1v10h2M17 2.500h2v10h-2" /></svg>
        <svg className="ml-[30px]" width="21" height="21" viewBox="0 0 21 21"><path d="M0 9.500C1.500 3 6 0 11 0c6 0 10 4 10 9.500v2.500H7c0 6 8 6.500 12.500 3.700v3.800C13 23 3.500 21 3 13c0-4 2-6.500 5-8C4 5 1.500 7 0 9.500zM7 8.500h7.500c0-5-7-4.500-7.500 0z" fill="#0b7bd9" /></svg>
        <div className="ml-[19px] flex h-full w-[40px] items-center justify-center border-b-2 border-[#f7bda3] pt-[2px]"><svg width="23" height="20" viewBox="0 0 23 20"><path d="M1 18V1.500Q1 .5 2 .5h6l1.500 3H21q1 0 1 1V18z" fill="#ffe08a" /><path d="M2 3h4" stroke="#d39f33" /><path d="M5 20v-7q0-2 2-2h9q2 0 2 2v7h-4v-4H9v4z" fill="#3fa9dd" /></svg></div>
        <svg className="ml-[18px]" width="21" height="24" viewBox="0 0 21 24"><path d="M0 6.500L21 5v17L0 20.500z" fill="#fff" /><path d="M6 9V5q0-4 4-4t4 4v3" fill="none" stroke="#fff" strokeWidth="1.500" /><path d="M5.500 9.700l5-.3v4h-5zM11.300 9.300l5.300-.3v4.400h-5.300zM5.500 14.200h5v4l-5-.4zM11.300 14.200h5.300v4.500l-5.300-.4z" fill="#111" /></svg>
        <div className="ml-[27px] flex h-[24px] w-[24px] items-center justify-center rounded-[2px] bg-white"><svg width="18" height="17" viewBox="0 0 18 17" fill="#1484e8"><path d="M5 0L0 3.500 4 6.500 9 3zM13 0l5 3.500-4 3L9 3zM0 9.500L5 13l4-3.300L4 6.500zM18 9.500L13 13 9 9.700l5-3.200zM5 14l4-3.200 4 3.200-4 3z" /></svg></div>
        <div className="ml-[12px] flex h-full w-[49px] items-center justify-center border-b-2 border-[#f7bda3] bg-[#3c3c3e]"><svg width="22" height="22" viewBox="0 0 22 22"><circle cx="11" cy="11" r="11" fill="#f9cf30" /><path d="M11 11L1.500 5.500A11 11 0 0 1 20.500 5.500H11z" fill="#e0392b" /><path d="M11 11L1.500 5.500A11 11 0 0 0 10 22l5.500-8.500z" fill="#2fa24c" /><path d="M20.500 5.500H11l4.500 8L10.500 22a11 11 0 0 0 10-16.500z" fill="#f9cf30" /><circle cx="11" cy="11" r="5" fill="#fff" /><circle cx="11" cy="11" r="4" fill="#4587ee" /></svg></div>
        <svg className="ml-[13px]" width="23" height="22" viewBox="0 0 23 22"><circle cx="11.500" cy="11" r="10.800" fill="#e66a12" /><circle cx="12.500" cy="8.500" r="8" fill="#2069b4" /><path d="M8 2q7-3 11 4-3-2-6-1-3 0-5-3z" fill="#6bc6ee" /><path d="M1 6l2-3.500L6 5q3-.5 4 2l2.500 1L9 10.500q-.5 4 4 4.500 4.500 0 6.500-5-.5 9-8.500 11Q2 20 .5 12z" fill="#f0801a" /><path d="M20 4q5 9-3 15 3-6 3-15z" fill="#fbc22f" /></svg>
        <svg className="ml-[26px]" width="24" height="23" viewBox="0 0 24 23"><circle cx="12" cy="11" r="10.500" fill="#222" stroke="#888" strokeWidth="1.500" /><path d="M4.500 15A8.500 8.500 0 0 1 12 3" fill="none" stroke="#3f9fdc" strokeWidth="3" /><path d="M12 3a8.500 8.500 0 0 1 7.500 12" fill="none" stroke="#f0902a" strokeWidth="3" /><path d="M9.500 14l6-10-2 11z" fill="#e9402a" stroke="#fff" strokeWidth=".7" /><text x="12" y="20.500" textAnchor="middle" fontSize="6.500" fontWeight="700" fill="#fff" fontFamily="Liberation Sans">WPM</text></svg>
        <div className="ml-[17px] flex h-full w-[40px] items-center justify-center border-b-2 border-[#f7bda3]"><svg width="23" height="22" viewBox="0 0 23 22"><path d="M0 1L4 0h17.500v22H0z" fill="#d9552b" /><path d="M2 2h17.500v12H2z" fill="#f7c6ae" /><text x="3" y="16.500" fontSize="18" fontWeight="700" fill="#c8431b" fontFamily="Liberation Sans">P</text><path d="M11 10l11-1v11l-13 0z" fill="#fff2ec" /><circle cx="16.500" cy="14.500" r="3" fill="none" stroke="#e0683f" strokeWidth="2" /></svg></div>
        <span className="ml-auto flex h-[32px] w-[32px] items-center justify-center rounded-full border-2 border-[#3b9eea] bg-radial from-[#174a9c] to-[#061e55] font-['Liberation_Sans'] text-[27px] font-bold leading-none">?</span>
        <svg className="ml-[13px]" width="13" height="8" fill="none" stroke="#fff" strokeWidth="1.300"><path d="M1 7.500l5.500-6 5.500 6" /></svg>
        <svg className="ml-[10px]" width="17" height="13" viewBox="0 0 17 13" fill="none" stroke="#fff" strokeWidth="1.200"><path d="M6 3.500h9v8H6z" /><path d="M8 5.500h3v4H8z" fill="#fff" /><path d="M16 6v3M1 2.500h4v3H1zM2 0v2.500M4 0v2.500M3 6v5h2" /></svg>
        <svg className="ml-[10px]" width="13" height="12" viewBox="0 0 13 12" fill="none" stroke="#ddd" strokeWidth="1.200"><path d="M1 11Q1 1 12 1M4 11.500Q4 4 12 4M7 11.500Q7 7 12 7" /><circle cx="11" cy="10.500" r="1" fill="#ddd" /></svg>
        <Fit w={23} className="ml-[11px] text-[12px]">ENG</Fit>
        <div className="ml-[13px] flex w-[58px] flex-col items-center text-[12px] leading-[18px]"><Fit w={27}>21:00</Fit><Fit w={58}>04-10-2016</Fit></div>
        <div className="relative ml-[18px] mr-[11px] h-[25px] w-[24px]">
          <svg width="16" height="17" viewBox="0 0 16 17"><path d="M0 0h16v13h-6v4l-4-4H0z" fill="#fff" /><path d="M3 3.500h10M3 6.500h10M3 9.500h6" stroke="#111" strokeWidth="1.300" /></svg>
          <span className="absolute -bottom-px right-0 flex size-[17px] items-center justify-center rounded-full border border-[#aaa] bg-[#2b2b2b] text-[11px]">1</span>
        </div>
        <div className="mr-[4px] h-full w-px bg-[#777]" />
      </div>
    </div>
  );
}

export default function App() {
  return (
    <div className="flex h-[768px] w-[1366px] flex-col overflow-hidden bg-white">
      <Browser />
      <PageHeader />
      <Canvas />
      <Taskbar />
    </div>
  );
}
